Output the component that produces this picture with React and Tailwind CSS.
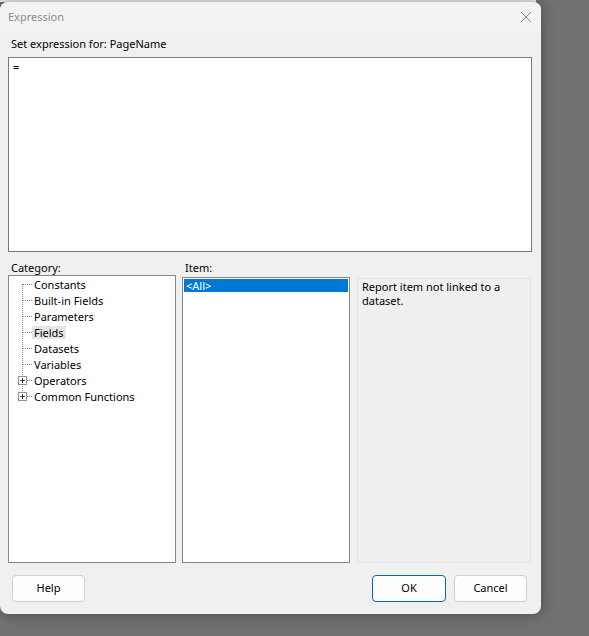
import React from 'react';

const categories = [
  { name: 'Constants' },
  { name: 'Built-in Fields' },
  { name: 'Parameters' },
  { name: 'Fields', active: true },
  { name: 'Datasets' },
  { name: 'Variables' },
  { name: 'Operators', expandable: true },
  { name: 'Common Functions', expandable: true },
];

const Connector = ({ first, last, expandable }) => (
  <svg width="23" height="16" className="shrink-0">
    <line
      x1="13.5"
      y1={first ? 8 : 0}
      x2="13.5"
      y2={last ? 9 : 16}
      stroke="#8a8a8a"
      strokeDasharray="1 1"
    />
    <line x1="14" y1="8.5" x2="23" y2="8.5" stroke="#8a8a8a" strokeDasharray="1 1" />
    {expandable && (
      <>
        <rect x="9.5" y="4.5" width="8" height="8" fill="#ffffff" stroke="#919191" />
        <line x1="11" y1="8.5" x2="16" y2="8.5" stroke="#333" />
        <line x1="13.5" y1="6" x2="13.5" y2="11" stroke="#333" />
      </>
    )}
  </svg>
);

const Button = ({ children, primary, className = '' }) => (
  <button
    className={`h-[27px] rounded-[4px] bg-[#fdfdfd] text-[11px] text-black flex items-center justify-center ${
      primary ? 'border border-[#0067c0]' : 'border border-[#d0d0d0]'
    } ${className}`}
  >
    {children}
  </button>
);

export default function App() {
  return (
    <div
      className="w-[589px] h-[636px] bg-[#717171] overflow-hidden"
      style={{ fontFamily: '"Segoe UI", "Noto Sans", "Open Sans", sans-serif' }}
    >
      <div className="h-[2px] w-[536px] bg-[#ececec]" />
      <div className="w-[541px] h-[612px] bg-[#f0f0f0] rounded-lg shadow-[0_0_14px_rgba(0,0,0,0.35)] flex flex-col overflow-hidden">
        {/* Title bar */}
        <div className="h-[30px] bg-[#f3f3f3] flex items-center justify-between pl-[8px] pr-[9px]">
          <span className="text-[11px] text-[#8b8b8b]">Expression</span>
          <svg width="12" height="12" viewBox="0 0 12 12">
            <path d="M1 1l10 10M11 1L1 11" stroke="#8a8a8a" strokeWidth="1" fill="none" />
          </svg>
        </div>

        {/* Expression label */}
        <div className="h-[25px] flex items-center pl-[11px] text-[11px] text-black">
          Set expression for: PageName
        </div>

        {/* Expression box */}
        <div className="mx-[8px] h-[195px] w-[524px] bg-white border border-[#7a7a7a] px-[4px] pt-[1px] text-[11px] text-black">
          =
        </div>

        {/* Labels */}
        <div className="mt-[9px] h-[14px] flex items-center text-[11px] text-black">
          <span className="pl-[11px] w-[185px]">Category:</span>
          <span>Item:</span>
        </div>

        {/* Lists */}
        <div className="flex items-start pl-[8px]">
          <div className="w-[168px] h-[288px] bg-white border border-[#828790]">
            {categories.map((c, i) => (
              <div key={c.name} className="flex items-center h-[16px] text-[11px] text-black">
                <Connector
                  first={i === 0}
                  last={i === categories.length - 1}
                  expandable={c.expandable}
                />
                <span className={`px-[2px] leading-[13px] ${c.active ? 'bg-[#e5e5e5]' : ''}`}>
                  {c.name}
                </span>
              </div>
            ))}
          </div>
          <div className="ml-[6px] mt-[2px] w-[168px] h-[286px] bg-white border border-[#828790] p-[1px]">
            <div className="h-[13px] bg-[#0078d7] text-white text-[11px] leading-[13px] pl-[2px]">
              &lt;All&gt;
            </div>
          </div>
          <div className="ml-[7px] mt-[3px] w-[174px] h-[285px] bg-[#efefef] border border-[#e2e2e2] px-[4px] pt-[1px] text-[11px] leading-[14px] text-black">
            Report item not linked to a dataset.
          </div>
        </div>

        {/* Buttons */}
        <div className="mt-[12px] flex items-center pl-[12px] pr-[14px]">
          <Button className="w-[73px]">Help</Button>
          <div className="flex-1" />
          <Button primary className="w-[74px]">OK</Button>
          <Button className="w-[73px] ml-[8px]">Cancel</Button>
        </div>
      </div>
    </div>
  );
}
